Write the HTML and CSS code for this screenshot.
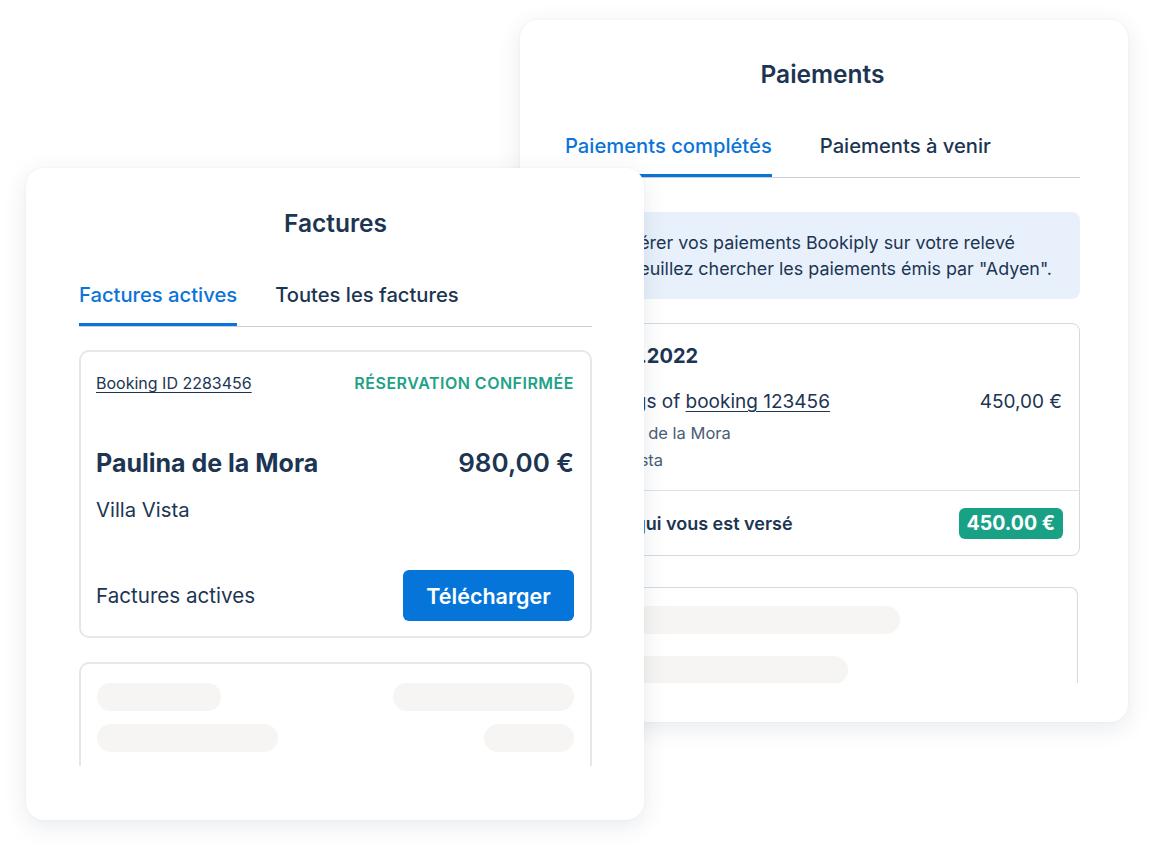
FILE: index.html
```html
<!DOCTYPE html>
<html lang="fr">
<head>
<meta charset="utf-8">
<title>Bookiply</title>
<link rel="stylesheet" href="styles.css">
</head>
<body>
<div class="stage">
  <section class="panel panel-back">
    <h2 class="panel-title">Paiements</h2>
    <nav class="tabs tabs-wide">
      <span class="tab active">Paiements complétés</span>
      <span class="tab">Paiements à venir</span>
    </nav>
    <div class="scroll scroll-back">
      <div class="info">Afin de repérer vos paiements Bookiply sur votre relevé bancaire, veuillez chercher les paiements émis par "Adyen".</div>
      <div class="pay-card">
        <div class="pay-body">
          <div class="pay-date">12.05.2022</div>
          <div class="pay-row">
            <span>Takings of <a class="link" href="#">booking 123456</a></span>
            <span>450,00 €</span>
          </div>
          <div class="pay-sub">Paulina de la Mora</div>
          <div class="pay-sub">Villa Vista</div>
        </div>
        <div class="pay-foot">
          <span class="pay-total">Total qui vous est versé</span>
          <span class="badge">450.00 €</span>
        </div>
      </div>
      <div class="skeleton-card skeleton-back">
        <div class="bar" style="width:313px"></div>
        <div class="bar" style="width:261px"></div>
      </div>
    </div>
  </section>

  <section class="panel panel-front">
    <h2 class="panel-title">Factures</h2>
    <nav class="tabs">
      <span class="tab active">Factures actives</span>
      <span class="tab">Toutes les factures</span>
    </nav>
    <div class="scroll scroll-front">
      <div class="invoice-card">
        <div class="inv-top">
          <a class="link booking" href="#">Booking ID 2283456</a>
          <span class="status">Réservation confirmée</span>
        </div>
        <div class="inv-main">
          <span class="inv-name">Paulina de la Mora</span>
          <span class="inv-amount">980,00 €</span>
        </div>
        <div class="inv-place">Villa Vista</div>
        <div class="inv-foot">
          <span class="inv-label">Factures actives</span>
          <button class="btn">Télécharger</button>
        </div>
      </div>
      <div class="skeleton-card skeleton-front">
        <div class="sk-row">
          <div class="bar" style="width:124px"></div>
          <div class="bar" style="width:181px"></div>
        </div>
        <div class="sk-row">
          <div class="bar" style="width:181px"></div>
          <div class="bar" style="width:90px"></div>
        </div>
      </div>
    </div>
  </section>
</div>
</body>
</html>
```

FILE: styles.css
```css
* { box-sizing: border-box; }
html, body { margin: 0; padding: 0; background: #ffffff; }
body {
  font-family: Inter, "Noto Sans", "Liberation Sans", sans-serif;
  color: #1c3553;
}
.stage {
  position: relative;
  width: 1154px;
  height: 852px;
  overflow: hidden;
}
.panel {
  position: absolute;
  background: #ffffff;
  border-radius: 18px;
  box-shadow: 0 6px 24px rgba(30, 50, 80, 0.1), 0 0 3px rgba(30, 50, 80, 0.05);
  display: flex;
  flex-direction: column;
}
.panel-back {
  left: 520px;
  top: 20px;
  width: 608px;
  height: 702px;
  padding: 40px 48px 0 45px;
}
.panel-front {
  left: 26px;
  top: 168px;
  width: 618px;
  height: 652px;
  padding: 41px 52px 0 53px;
}
.panel-title {
  margin: 0;
  font-size: 24.5px;
  line-height: 28px;
  font-weight: 600;
  text-align: center;
  color: #1c3553;
}
.tabs {
  margin-top: 46px;
  display: flex;
  gap: 38px;
  border-bottom: 1px solid #c9d0d8;
}
.tabs-wide { gap: 48px; }
.tab {
  font-size: 20.2px;
  line-height: 24px;
  font-weight: 500;
  padding-bottom: 16px;
  border-bottom: 3px solid transparent;
  color: #1c3553;
}
.tab.active {
  color: #0b74d9;
  border-bottom-color: #0b74d9;
}
.scroll { overflow: hidden; }
.scroll-back { height: 505px; padding-top: 34px; }
.scroll-front { height: 439px; padding-top: 23px; }

.info {
  margin-left: -28px;
  background: #e8f1fb;
  border-radius: 8px;
  padding: 18px 14px 17px 9px;
  font-size: 17.9px;
  line-height: 26px;
  color: #1c3553;
}
.pay-card {
  margin-top: 24px;
  border: 1px solid #d3dae2;
  border-radius: 8px;
}
.pay-body { padding: 19px 17px 17px 21px; border-bottom: 1px solid #dde3e9; }
.pay-date { font-size: 20px; line-height: 26px; font-weight: 700; }
.pay-row {
  margin-top: 20px;
  display: flex;
  justify-content: space-between;
  font-size: 19px;
  line-height: 26px;
}
.pay-sub { font-size: 16.5px; line-height: 26px; color: #4a5e73; margin-top: 1px; }
.pay-row + .pay-sub { margin-top: 5px; }
.pay-foot {
  display: flex;
  justify-content: space-between;
  align-items: center;
  padding: 17px 16px 16px 21px;
}
.pay-total { font-size: 18px; font-weight: 600; }
.badge {
  background: #19a186;
  color: #ffffff;
  font-size: 19.5px;
  font-weight: 700;
  line-height: 31px;
  padding: 0 8px;
  border-radius: 6px;
}
.link { color: inherit; text-decoration: underline; text-underline-offset: 3px; text-decoration-thickness: 1px; }

.skeleton-card {
  border: 1px solid #d3dae2;
  border-bottom: none;
  border-radius: 8px 8px 0 0;
  display: flex;
  flex-direction: column;
  gap: 22px;
}
.skeleton-back { margin-top: 31px; height: 200px; padding: 18px 21px; margin-right: 2px; }
.skeleton-front {
  margin-top: 24px;
  height: 200px;
  border: 2px solid #e4e7eb;
  border-bottom: none;
  border-radius: 10px 10px 0 0;
  padding: 19px 16px;
  gap: 13px;
}
.sk-row { display: flex; justify-content: space-between; }
.bar { height: 28px; border-radius: 14px; background: #f6f5f3; }

.invoice-card {
  border: 2px solid #e4e7eb;
  border-radius: 10px;
  padding: 21px 16px 15px 15px;
}
.inv-top { display: flex; justify-content: space-between; align-items: center; line-height: 20px; }
.booking { font-size: 16px; }
.status {
  font-size: 16px;
  font-weight: 600;
  letter-spacing: 0.5px;
  text-transform: uppercase;
  color: #20a286;
}
.inv-main {
  margin-top: 55px;
  display: flex;
  justify-content: space-between;
  align-items: baseline;
  line-height: 30px;
}
.inv-name { font-size: 25px; font-weight: 700; }
.inv-amount { font-size: 26px; font-weight: 600; }
.inv-place { margin-top: 19px; font-size: 20.3px; line-height: 26px; }
.inv-foot {
  margin-top: 47px;
  display: flex;
  justify-content: space-between;
  align-items: center;
}
.inv-label { font-size: 20.6px; }
.btn {
  font-family: inherit;
  width: 171px;
  height: 51px;
  border: none;
  border-radius: 6px;
  background: #0675da;
  color: #ffffff;
  font-size: 21.5px;
  font-weight: 600;
  cursor: pointer;
}
```
